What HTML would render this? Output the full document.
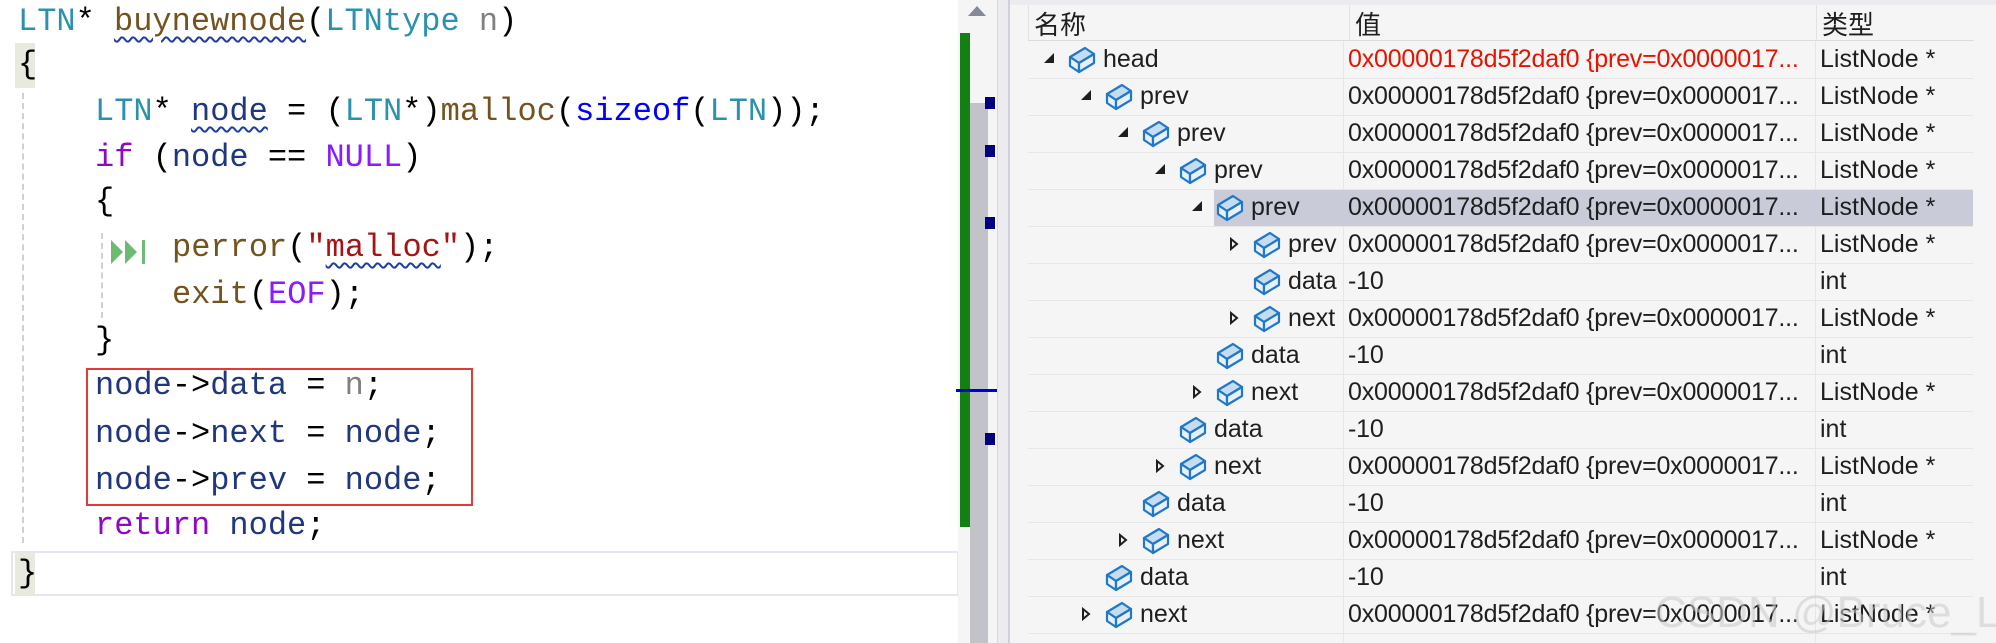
<!DOCTYPE html>
<html><head><meta charset="utf-8"><style>
body{margin:0;width:1996px;height:643px;overflow:hidden;background:#fff;position:relative;font-family:"Liberation Sans","Noto Sans CJK SC",sans-serif}
.c{position:absolute;left:0;font-family:"Liberation Mono",monospace;font-size:32px;white-space:pre;line-height:46px;color:#000}
.t{color:#2b91af}.f{color:#74531f}.p{color:#808080}.v{color:#1f377f}.k{color:#8f08c4}.b{color:#0000ff}.m{color:#8a1bff}.s{color:#a31515}
.sq{text-decoration:underline wavy #1f3f9f;text-decoration-thickness:2px;text-underline-offset:6px}
.row{position:absolute;left:1028px;width:945px;height:37px;border-bottom:1px solid #e6e6e6;font-size:25px;line-height:37px;color:#1e1e1e}
.row span{position:absolute;top:0;white-space:nowrap}
.val{left:320px}.typ{left:792px}
.ic{position:absolute;top:4px}
.ar{position:absolute;top:0;font-size:14px}
</style></head><body>
<div style="position:absolute;left:15px;top:43px;width:20px;height:45px;background:#e8eadd"></div>
<div style="position:absolute;left:11px;top:551px;width:944px;height:41px;border:2px solid #e6e6f0"></div>
<div style="position:absolute;left:15px;top:553px;width:20px;height:43px;background:#e8eadd"></div>
<div style="position:absolute;left:22px;top:93px;height:450px;border-left:2px dashed #d0d0d0"></div>
<div style="position:absolute;left:101px;top:233px;height:85px;border-left:2px dashed #d0d0d0"></div>
<div class="c" style="top:-1px;left:18px"><span class="t">LTN</span>* <span class="f sq">buynewnode</span>(<span class="t">LTNtype</span> <span class="p">n</span>)</div>
<div class="c" style="top:42px;left:18px">{</div>
<div class="c" style="top:89px;left:95px"><span class="t">LTN</span>* <span class="v sq">node</span> = (<span class="t">LTN</span>*)<span class="f">malloc</span>(<span class="b">sizeof</span>(<span class="t">LTN</span>));</div>
<div class="c" style="top:135px;left:95px"><span class="k">if</span> (<span class="v">node</span> == <span class="m">NULL</span>)</div>
<div class="c" style="top:179px;left:95px">{</div>
<svg style="position:absolute;left:111px;top:240px" width="36" height="24"><polygon points="0,0 12,12 0,24" fill="#6dbb73"/><polygon points="14,0 26,12 14,24" fill="#6dbb73"/><rect x="31" y="0" width="3" height="24" fill="#6dbb73"/></svg>
<div class="c" style="top:225px;left:172px"><span class="f">perror</span>(<span class="s">"<span class="sq">malloc</span>"</span>);</div>
<div class="c" style="top:272px;left:172px"><span class="f">exit</span>(<span class="m">EOF</span>);</div>
<div class="c" style="top:318px;left:95px">}</div>
<div style="position:absolute;left:86px;top:368px;width:383px;height:134px;border:2px solid #e53935"></div>
<div class="c" style="top:363px;left:95px"><span class="v">node</span>-><span class="v">data</span> = <span class="p">n</span>;</div>
<div class="c" style="top:411px;left:95px"><span class="v">node</span>-><span class="v">next</span> = <span class="v">node</span>;</div>
<div class="c" style="top:458px;left:95px"><span class="v">node</span>-><span class="v">prev</span> = <span class="v">node</span>;</div>
<div class="c" style="top:503px;left:95px"><span class="k">return</span> <span class="v">node</span>;</div>
<div class="c" style="top:551px;left:18px">}</div>
<div style="position:absolute;left:958px;top:0;width:40px;height:643px;background:#f5f5f5"></div>
<div style="position:absolute;left:968px;top:6px;width:0;height:0;border-left:9px solid transparent;border-right:9px solid transparent;border-bottom:10px solid #868999"></div>
<div style="position:absolute;left:970px;top:103px;width:18px;height:540px;background:#c2c3c9"></div>
<div style="position:absolute;left:960px;top:33px;width:10px;height:494px;background:#138013"></div>
<div style="position:absolute;left:985px;top:97px;width:10px;height:12px;background:#00007f"></div>
<div style="position:absolute;left:985px;top:145px;width:10px;height:12px;background:#00007f"></div>
<div style="position:absolute;left:985px;top:217px;width:10px;height:12px;background:#00007f"></div>
<div style="position:absolute;left:985px;top:433px;width:10px;height:12px;background:#00007f"></div>
<div style="position:absolute;left:956px;top:389px;width:42px;height:3px;background:#0000cc"></div>
<div style="position:absolute;left:997px;top:0;width:13px;height:643px;background:#ebebf0;border-left:1px solid #d6d6de;border-right:2px solid #d0d0da;box-sizing:border-box"></div>
<div style="position:absolute;left:1010px;top:0;width:986px;height:643px;background:#f5f5f5"></div>
<div style="position:absolute;left:1010px;top:0;width:986px;height:5px;background:#ececf0"></div>
<div style="position:absolute;left:1028px;top:5px;width:945px;height:35px;border-bottom:1px solid #dcdcdc;border-left:1px solid #e2e2e2;font-size:26px;line-height:40px;color:#1e1e1e">
<span style="position:absolute;left:5px">名称</span><span style="position:absolute;left:320px;top:0;height:35px;border-left:1px solid #e2e2e2;padding-left:5px">值</span><span style="position:absolute;left:787px;height:35px;border-left:1px solid #e2e2e2;padding-left:5px">类型</span></div>
<div style="position:absolute;left:1343px;top:41px;height:602px;border-left:1px solid #e6e6e6"></div>
<div style="position:absolute;left:1815px;top:41px;height:602px;border-left:1px solid #e6e6e6"></div>
<div style="position:absolute;left:1214px;top:190px;width:759px;height:36px;background:#c9cbd9"></div>
<svg width="0" height="0" style="position:absolute"><defs><g id="cube"><polygon points="2,12 17,3 26,9 11,18" fill="#c6dcf0" stroke="#1f78c8" stroke-width="2.2" stroke-linejoin="round"/><polygon points="2,12 11,18 11,27 2,21" fill="#e8f1fa" stroke="#1f78c8" stroke-width="2.2" stroke-linejoin="round"/><polygon points="11,18 26,9 26,18 11,27" fill="#e8f1fa" stroke="#1f78c8" stroke-width="2.2" stroke-linejoin="round"/></g></defs></svg>
<div id="rows"></div>
<script>
var R=[["head",0,1],["prev",1,1],["prev",2,1],["prev",3,1],["prev",4,1],["prev",5,2],["data",5,0],["next",5,2],["data",4,0],["next",4,2],["data",3,0],["next",3,2],["data",2,0],["next",2,2],["data",1,0],["next",1,2]];
var h="";R.forEach(function(r,i){var n=r[0],l=r[1],a=r[2],top=41+i*37,x=l*37;
var isInt=n=="data";var val=isInt?"-10":"0x00000178d5f2daf0 {prev=0x0000017...";
h+='<div class="row" style="top:'+top+'px">';
if(a==1)h+='<svg class="ar" style="left:'+(x+15)+'px;top:11px" width="12" height="12"><polygon points="11,1 11,11 1,11" fill="#1e1e1e"/></svg>';
if(a==2)h+='<svg class="ar" style="left:'+(x+16)+'px;top:11px" width="10" height="14"><polygon points="2,2 8,7 2,12" fill="none" stroke="#1e1e1e" stroke-width="2"/></svg>';
h+='<svg class="ic" style="left:'+(x+40)+'px" width="29" height="30"><use href="#cube"/></svg>';
h+='<span style="left:'+(x+75)+'px">'+n+'</span>';
h+='<span class="val" style="left:320px;letter-spacing:-0.2px;'+(i==0?'color:#e51400':'')+'">'+val+'</span>';
h+='<span class="typ">'+(isInt?"int":"ListNode *")+'</span></div>';});
document.getElementById("rows").innerHTML=h;
</script>
<div style="position:absolute;left:1655px;top:588px;font-size:44px;color:rgba(200,200,200,0.55);white-space:nowrap">CSDN @Bruce_Li_Q</div>
</body></html>
